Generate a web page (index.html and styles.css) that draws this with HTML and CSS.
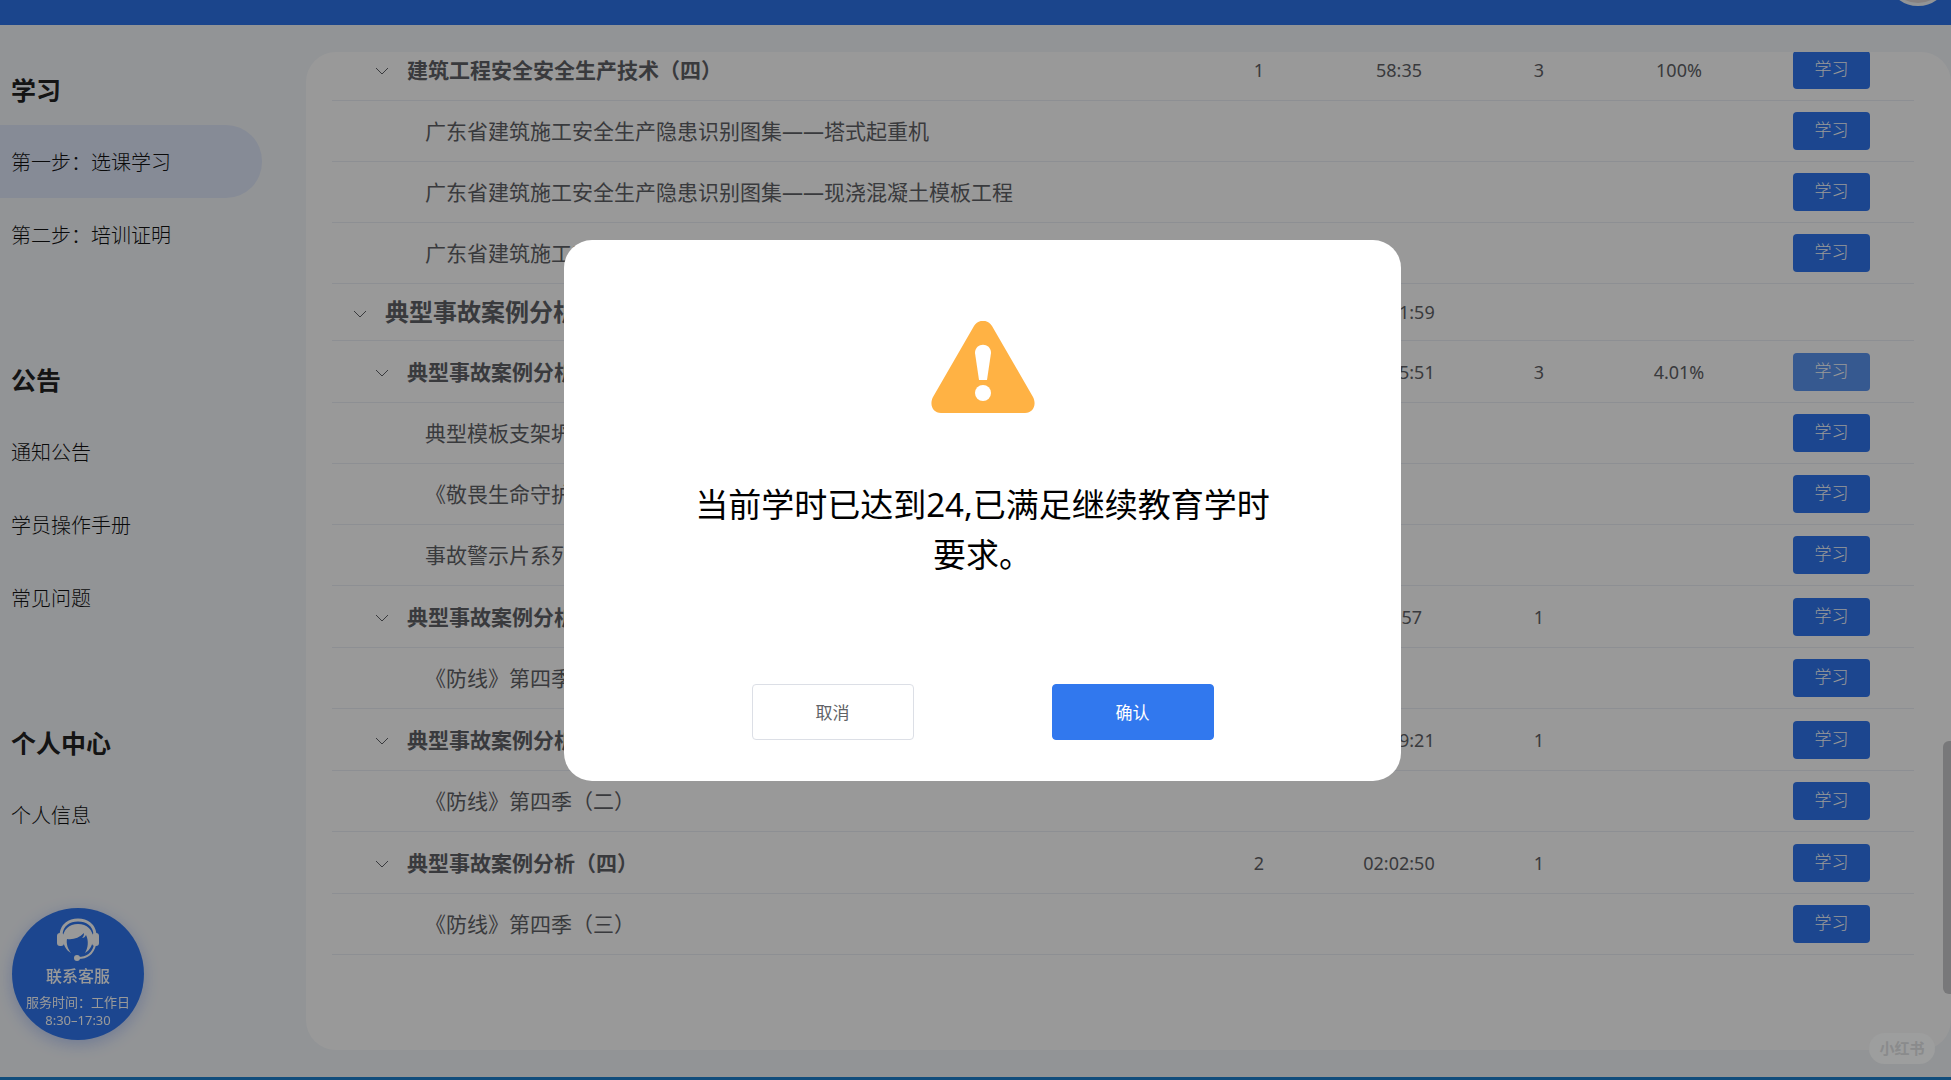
FILE: index.html
```html
<!DOCTYPE html>
<html lang="zh-CN">
<head>
<meta charset="utf-8">
<title>选课学习</title>
<link rel="stylesheet" href="styles.css">
</head>
<body>
<svg class="defs" aria-hidden="true">
  <symbol id="chevron" viewBox="0 0 14 8"><path d="M1 1l6 6 6-6" fill="none" stroke="currentColor" stroke-width="1"/></symbol>
</svg>
<header class="topbar"><span class="avatar"></span></header>
<div class="layout">
  <nav class="sidebar">
    <section class="menu">
      <h2 class="menu-title">学习</h2>
      <a class="menu-item active" href="#">第一步：选课学习</a>
      <a class="menu-item" href="#">第二步：培训证明</a>
    </section>
    <section class="menu">
      <h2 class="menu-title">公告</h2>
      <a class="menu-item" href="#">通知公告</a>
      <a class="menu-item" href="#">学员操作手册</a>
      <a class="menu-item" href="#">常见问题</a>
    </section>
    <section class="menu">
      <h2 class="menu-title">个人中心</h2>
      <a class="menu-item" href="#">个人信息</a>
    </section>
  </nav>
  <main class="card">
    <table class="courses">
      <colgroup><col><col class="col-num"><col class="col-num"><col class="col-num"><col class="col-num"><col class="col-act"></colgroup>
      <tbody>
        <tr class="unit"><td><svg class="chev"><use href="#chevron"/></svg>建筑工程安全安全生产技术（四）</td><td>1</td><td>58:35</td><td>3</td><td>100%</td><td><button class="study">学习</button></td></tr>
        <tr class="lesson"><td>广东省建筑施工安全生产隐患识别图集——塔式起重机</td><td></td><td></td><td></td><td></td><td><button class="study">学习</button></td></tr>
        <tr class="lesson"><td>广东省建筑施工安全生产隐患识别图集——现浇混凝土模板工程</td><td></td><td></td><td></td><td></td><td><button class="study">学习</button></td></tr>
        <tr class="lesson"><td>广东省建筑施工安全生产</td><td></td><td></td><td></td><td></td><td><button class="study">学习</button></td></tr>
        <tr class="chapter"><td><svg class="chev"><use href="#chevron"/></svg>典型事故案例分析</td><td></td><td>06:11:59</td><td></td><td></td><td></td></tr>
        <tr class="unit"><td><svg class="chev"><use href="#chevron"/></svg>典型事故案例分析（一）</td><td></td><td>01:35:51</td><td>3</td><td>4.01%</td><td><button class="study hover">学习</button></td></tr>
        <tr class="lesson"><td>典型模板支架坍塌</td><td></td><td></td><td></td><td></td><td><button class="study">学习</button></td></tr>
        <tr class="lesson"><td>《敬畏生命守护》</td><td></td><td></td><td></td><td></td><td><button class="study">学习</button></td></tr>
        <tr class="lesson"><td>事故警示片系列</td><td></td><td></td><td></td><td></td><td><button class="study">学习</button></td></tr>
        <tr class="unit"><td><svg class="chev"><use href="#chevron"/></svg>典型事故案例分析（二）</td><td></td><td>53:57</td><td>1</td><td></td><td><button class="study">学习</button></td></tr>
        <tr class="lesson"><td>《防线》第四季（一）</td><td></td><td></td><td></td><td></td><td><button class="study">学习</button></td></tr>
        <tr class="unit"><td><svg class="chev"><use href="#chevron"/></svg>典型事故案例分析（三）</td><td></td><td>01:39:21</td><td>1</td><td></td><td><button class="study">学习</button></td></tr>
        <tr class="lesson"><td>《防线》第四季（二）</td><td></td><td></td><td></td><td></td><td><button class="study">学习</button></td></tr>
        <tr class="unit"><td><svg class="chev"><use href="#chevron"/></svg>典型事故案例分析（四）</td><td>2</td><td>02:02:50</td><td>1</td><td></td><td><button class="study">学习</button></td></tr>
        <tr class="lesson"><td>《防线》第四季（三）</td><td></td><td></td><td></td><td></td><td><button class="study">学习</button></td></tr>
      </tbody>
    </table>
  </main>
</div>
<span class="scroll-thumb"></span>
<a class="service" href="#">
  <svg class="service-icon" viewBox="0 0 44 44">
    <path d="M5 16C6 7 13 2 22 2s16 5 17 14" fill="none" stroke="#fff" stroke-width="3"/>
    <path d="M22 6C13 6 7 12 7 20c0 7 3 12 8 15-3-4-5-9-4-14 6 1 12-1 17-6 0 3-1 4-2 5 2 0 3-1 4-3 3 6 2 13-1 18 5-3 8-8 8-15 0-8-6-14-15-14z" fill="#fff"/>
    <rect x="1" y="15" width="7" height="13" rx="3" fill="#fff"/>
    <rect x="36" y="15" width="7" height="13" rx="3" fill="#fff"/>
    <path d="M39 27c-2 8-8 13-17 13" fill="none" stroke="#fff" stroke-width="2"/>
    <circle cx="21" cy="40" r="3" fill="#fff"/>
  </svg>
  <span class="service-name">联系客服</span>
  <span class="service-time">服务时间：工作日<br>8:30–17:30</span>
</a>
<footer class="bottombar"></footer>
<div class="mask">
  <div class="dialog" role="dialog" aria-modal="true" aria-labelledby="msg">
    <svg class="warn" viewBox="0 0 104 92">
      <path d="M43 5C47-2 57-2 61 5l41 71c4 8 0 16-8 16H10C2 92-2 84 2 76z" fill="#ffb244"/>
      <path d="M44 32c0-11 16-11 16 0l-4 27h-8z" fill="#fff"/>
      <circle cx="52" cy="72" r="8" fill="#fff"/>
    </svg>
    <p class="message" id="msg">当前学时已达到24,已满足继续教育学时要求。</p>
    <div class="actions">
      <button class="btn">取消</button>
      <button class="btn primary">确认</button>
    </div>
  </div>
</div>
<span class="watermark">小红书</span>
</body>
</html>
```
FILE: styles.css
```css
* { box-sizing: border-box; }
body {
  margin: 0;
  height: 100vh;
  display: flex;
  flex-direction: column;
  overflow: hidden;
  background: #f4f7fb;
  color: #303133;
  font-family: "Noto Sans", "Noto Sans CJK SC", sans-serif;
  font-weight: 400;
}
button { font: inherit; cursor: pointer; }
.defs { position: absolute; width: 0; height: 0; }

.topbar {
  flex: none;
  height: 25px;
  padding: 0 1px 19px 0;
  display: flex;
  justify-content: flex-end;
  align-items: flex-end;
  overflow: hidden;
  background: #2e74ea;
}
.avatar {
  flex: none;
  width: 64px;
  height: 64px;
  border: 3px solid #f4f7fb;
  border-radius: 50%;
  background: #e0d8d8;
}

.layout { flex: 1; min-height: 0; display: flex; }
.sidebar { flex: none; width: 306px; padding-top: 28px; }
.menu { margin-bottom: 72px; }
.menu-title {
  margin: 0;
  padding-left: 11px;
  font-size: 25px;
  font-weight: 700;
  line-height: 74px;
  height: 72px;
  color: #222;
}
.menu-item {
  display: block;
  width: 262px;
  height: 73px;
  padding-left: 11px;
  font-size: 20px;
  font-weight: 300;
  line-height: 76px;
  color: #111;
  text-decoration: none;
  border-radius: 0 36px 36px 0;
}
.menu-item.active { background: #dfe8fb; }

.card {
  flex: 1;
  min-width: 0;
  margin: 27px 0;
  padding: 0 37px 0 26px;
  overflow: hidden;
  border-radius: 30px;
  background: #fff;
}
.courses {
  width: 100%;
  margin-top: -13px;
  table-layout: fixed;
  border-collapse: separate;
  border-spacing: 0;
}
.col-num { width: 140px; }
.col-act { width: 165px; }
.courses td {
  height: 61px;
  padding: 0;
  border-bottom: 1px solid #ebeef5;
  font-size: 18px;
  line-height: 24px;
  text-align: center;
  color: #606266;
}
.courses td:first-child {
  padding-left: 93px;
  font-size: 21px;
  text-align: left;
  white-space: nowrap;
}
.courses .unit td { height: 62px; }
.courses .unit td:first-child { padding-left: 43px; font-weight: 700; }
.courses .chapter td { height: 57px; }
.courses .chapter td:first-child { padding-left: 21px; font-size: 24px; font-weight: 700; }
.chev { width: 14px; height: 8px; margin-right: 18px; vertical-align: 3px; }
.study {
  display: block;
  width: 77px;
  height: 38px;
  margin: 0 auto;
  padding: 0 0 2px;
  border: 0;
  border-radius: 4px;
  background: #2f76ee;
  color: #fff;
  font-size: 17px;
  font-weight: 300;
}
.study.hover { background: #5a94f0; }

.scroll-thumb {
  position: fixed;
  right: 0;
  top: 741px;
  width: 8px;
  height: 253px;
  border-radius: 6px 0 0 6px;
  background: #c8c9cb;
}
.service {
  position: fixed;
  left: 12px;
  bottom: 40px;
  width: 132px;
  height: 132px;
  padding-top: 10px;
  display: flex;
  flex-direction: column;
  align-items: center;
  border-radius: 50%;
  background: #2f76ee;
  box-shadow: 0 4px 16px rgba(47, 100, 238, .3);
  color: #fff;
  text-align: center;
  text-decoration: none;
}
.service-icon { width: 44px; height: 44px; }
.service-name { margin-top: 2px; font-size: 16px; font-weight: 500; line-height: 24px; }
.service-time { margin-top: 5px; font-size: 13px; line-height: 18px; white-space: nowrap; }
.bottombar { position: relative; z-index: 3; flex: none; height: 3px; background: #114d7c; }

.mask {
  position: fixed;
  inset: 0;
  z-index: 2;
  display: flex;
  justify-content: center;
  align-items: flex-start;
  padding: 240px 0 0 14px;
  background: rgba(0, 0, 0, .4);
}
.dialog {
  width: 837px;
  padding: 81px 40px 41px;
  display: flex;
  flex-direction: column;
  align-items: center;
  border-radius: 28px;
  background: #fff;
}
.warn { width: 104px; height: 92px; }
.message {
  max-width: 600px;
  margin: 67px 0 104px;
  font-size: 33px;
  line-height: 50px;
  text-align: center;
  color: #000;
}
.actions { display: flex; gap: 138px; }
.btn {
  width: 162px;
  height: 56px;
  padding: 0 0 2px;
  border: 1px solid #dcdfe6;
  border-radius: 4px;
  background: #fff;
  color: #606266;
  font-size: 17px;
}
.btn.primary { border-color: #3178ee; background: #3178ee; color: #fff; }
.watermark {
  position: fixed;
  z-index: 4;
  right: 16px;
  bottom: 16px;
  width: 66px;
  border-radius: 16px;
  background: #9d9e9e;
  color: #8a8b8c;
  font-size: 15px;
  font-weight: 700;
  line-height: 31px;
  text-align: center;
}
```
